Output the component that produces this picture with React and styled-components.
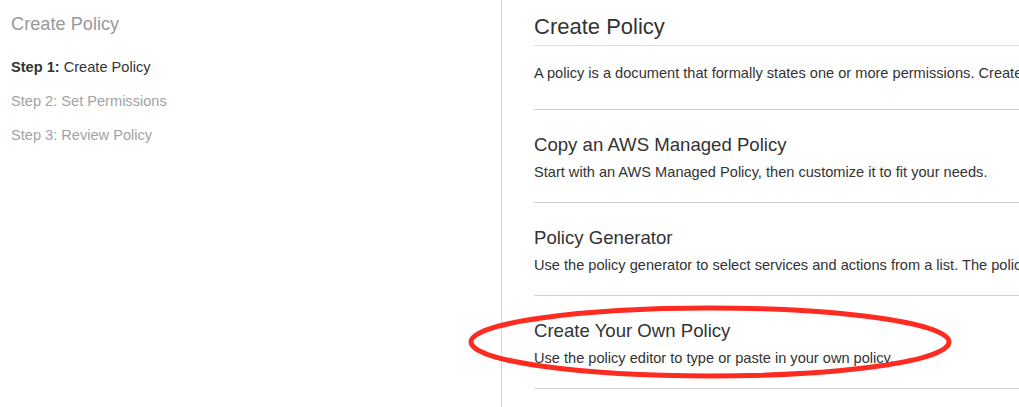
import React from "react";
import styled, { createGlobalStyle } from "styled-components";

const GlobalStyle = createGlobalStyle`
  html, body {
    margin: 0;
    padding: 0;
    background: #fff;
  }
  body {
    font-family: "Liberation Sans", Arial, sans-serif;
    color: #333;
  }
`;

const Page = styled.div`
  position: relative;
  display: flex;
  width: 1019px;
  height: 407px;
  overflow: hidden;
`;

const Sidebar = styled.aside`
  flex: 0 0 502px;
  box-sizing: border-box;
  padding: 12px 0 0 11px;
  border-right: 1px solid #d5d5d5;
`;

const SideTitle = styled.div`
  font-size: 18.2px;
  line-height: 24px;
  color: #999;
  margin-bottom: 21px;
`;

const Step = styled.div`
  font-size: 14.6px;
  line-height: 20px;
  color: ${(p) => (p.active ? "#333" : "#a3a3a3")};
  margin-bottom: 14px;

  b {
    font-weight: bold;
  }
`;

const Main = styled.main`
  flex: 1;
  min-width: 0;
  overflow: hidden;
  padding-left: 32px;
  white-space: nowrap;
`;

const Heading = styled.h1`
  margin: 0;
  padding: 13px 0 4px;
  font-size: 22px;
  line-height: 28px;
  font-weight: normal;
  color: #333;
  border-bottom: 1px solid #dcdcdc;
  width: 700px;
`;

const Intro = styled.p`
  margin: 0;
  padding: 17px 0 26px;
  font-size: 14.6px;
  line-height: 20px;
  color: #333;
  border-bottom: 1px solid #d3d3d3;
  width: 700px;
`;

const Option = styled.section`
  padding: 23px 0 20px;
  border-bottom: 1px solid #d3d3d3;
  width: 700px;
`;

const OptionTitle = styled.h2`
  margin: 0 0 5px;
  font-size: 18.6px;
  line-height: 24px;
  font-weight: normal;
  color: #333;
`;

const OptionText = styled.p`
  margin: 0;
  font-size: 14.6px;
  line-height: 20px;
  color: #333;
`;

const Circle = styled.svg`
  position: absolute;
  left: 466px;
  top: 303px;
  pointer-events: none;
`;

const options = [
  {
    title: "Copy an AWS Managed Policy",
    text: "Start with an AWS Managed Policy, then customize it to fit your needs.",
  },
  {
    title: "Policy Generator",
    text: "Use the policy generator to select services and actions from a list. The policy generator uses your selections to create a policy.",
  },
  {
    title: "Create Your Own Policy",
    text: "Use the policy editor to type or paste in your own policy.",
  },
];

export default function App() {
  return (
    <>
      <GlobalStyle />
      <Page>
        <Sidebar>
          <SideTitle>Create Policy</SideTitle>
          <Step active>
            <b>Step 1:</b> Create Policy
          </Step>
          <Step>Step 2: Set Permissions</Step>
          <Step>Step 3: Review Policy</Step>
        </Sidebar>
        <Main>
          <Heading>Create Policy</Heading>
          <Intro>
            A policy is a document that formally states one or more permissions. Create a policy by copying an AWS Managed Policy.
          </Intro>
          {options.map((o) => (
            <Option key={o.title}>
              <OptionTitle>{o.title}</OptionTitle>
              <OptionText>{o.text}</OptionText>
            </Option>
          ))}
        </Main>
        <Circle width="488" height="78" viewBox="0 0 488 78">
          <ellipse
            cx="244"
            cy="39"
            rx="239"
            ry="34"
            fill="none"
            stroke="#fd2b20"
            strokeWidth="5"
          />
        </Circle>
      </Page>
    </>
  );
}
